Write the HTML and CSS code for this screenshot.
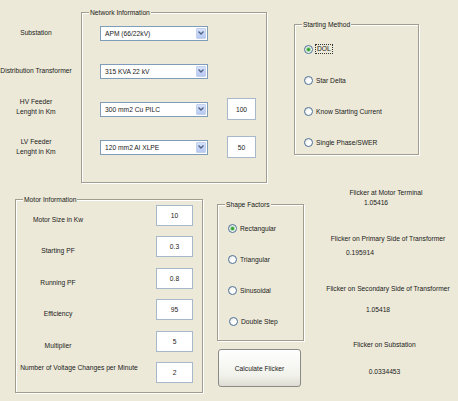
FILE: index.html
```html
<!DOCTYPE html>
<html lang="en">
<head>
    <meta charset="UTF-8">
    <meta name="viewport" content="width=device-width, initial-scale=1.0">
    <title>Flicker Calculator</title>
    <link rel="stylesheet" href="styles.css">
</head>
<body>
    <div class="app">
        <div class="top">
            <div class="side-labels">
                <div class="lbl">Substation</div>
                <div class="lbl">Distribution Transformer</div>
                <div class="lbl lbl-up">HV Feeder<br>Lenght in Km</div>
                <div class="lbl">LV Feeder<br>Lenght in Km</div>
            </div>

            <div class="panel net">
                <span class="panel-title">Network Information</span>
                <div class="net-row">
                    <div class="combo"><span>APM (66/22kV)</span><i class="combo-btn"><svg width="6" height="4" viewBox="0 0 6 4"><path d="M0.5 0.5 L3 3 L5.5 0.5" fill="none" stroke="#4d6185" stroke-width="1.3"/></svg></i></div>
                </div>
                <div class="net-row">
                    <div class="combo"><span>315 KVA 22 kV</span><i class="combo-btn"><svg width="6" height="4" viewBox="0 0 6 4"><path d="M0.5 0.5 L3 3 L5.5 0.5" fill="none" stroke="#4d6185" stroke-width="1.3"/></svg></i></div>
                </div>
                <div class="net-row">
                    <div class="combo"><span>300 mm2 Cu PILC</span><i class="combo-btn"><svg width="6" height="4" viewBox="0 0 6 4"><path d="M0.5 0.5 L3 3 L5.5 0.5" fill="none" stroke="#4d6185" stroke-width="1.3"/></svg></i></div>
                    <div class="edit net-edit">100</div>
                </div>
                <div class="net-row">
                    <div class="combo"><span>120 mm2 Al XLPE</span><i class="combo-btn"><svg width="6" height="4" viewBox="0 0 6 4"><path d="M0.5 0.5 L3 3 L5.5 0.5" fill="none" stroke="#4d6185" stroke-width="1.3"/></svg></i></div>
                    <div class="edit net-edit">50</div>
                </div>
            </div>

            <div class="panel start">
                <span class="panel-title">Starting Method</span>
                <label class="radio"><i class="radio-dot on"></i><span class="focus">DOL</span></label>
                <label class="radio"><i class="radio-dot"></i>Star Delta</label>
                <label class="radio"><i class="radio-dot"></i>Know Starting Current</label>
                <label class="radio"><i class="radio-dot"></i>Single Phase/SWER</label>
            </div>
        </div>

        <div class="bottom">
            <div class="panel motor">
                <span class="panel-title">Motor Information</span>
                <div class="motor-row"><div class="lbl">Motor Size in Kw</div><div class="edit">10</div></div>
                <div class="motor-row"><div class="lbl">Starting PF</div><div class="edit">0.3</div></div>
                <div class="motor-row"><div class="lbl">Running PF</div><div class="edit">0.8</div></div>
                <div class="motor-row"><div class="lbl">Efficiency</div><div class="edit">95</div></div>
                <div class="motor-row"><div class="lbl">Multiplier</div><div class="edit">5</div></div>
                <div class="motor-row"><div class="lbl lbl-wide">Number of Voltage Changes per Minute</div><div class="edit">2</div></div>
            </div>

            <div class="mid">
                <div class="panel shape">
                    <span class="panel-title">Shape Factors</span>
                    <label class="radio"><i class="radio-dot on"></i>Rectangular</label>
                    <label class="radio"><i class="radio-dot"></i>Triangular</label>
                    <label class="radio"><i class="radio-dot"></i>Sinusoidal</label>
                    <label class="radio radio-shift"><i class="radio-dot"></i>Double Step</label>
                </div>
                <button type="button" class="calc">Calculate Flicker</button>
            </div>

            <div class="results">
                <p class="r1">Flicker at Motor Terminal</p>
                <p class="r2">1.05416</p>
                <p class="r3">Flicker on Primary Side of Transformer</p>
                <p class="r4">0.195914</p>
                <p class="r5">Flicker on Secondary Side of Transformer</p>
                <p class="r6">1.05418</p>
                <p class="r7">Flicker on Substation</p>
                <p class="r8">0.0334453</p>
            </div>
        </div>
    </div>
</body>
</html>
```

FILE: styles.css
```css
* { box-sizing: border-box; }
body { margin: 0; background: #ece9d8; font-family: "Liberation Sans", Arial, sans-serif; font-size: 6.7px; color: #1a1a1a; }
.app { width: 458px; height: 401px; overflow: hidden; background: #ece9d8; }

/* panels (etched frame with title on the border) */
.panel { position: relative; border: 1px solid #a19e90; box-shadow: inset 1px 1px 0 #fff, 1px 1px 0 #fff; }
.panel-title { position: absolute; top: -5px; left: 7px; padding: 0 1px; line-height: 9px; background: #ece9d8; white-space: nowrap; }

/* top part */
.top { display: flex; align-items: flex-start; height: 183px; }
.side-labels { width: 81px; padding: 14px 9px 0 0; display: flex; flex-direction: column; }
.side-labels .lbl { height: 38px; display: flex; align-items: center; justify-content: center; text-align: center; line-height: 10px; white-space: nowrap; }
.side-labels .lbl-up { padding-bottom: 5px; }

.net { width: 186px; height: 171px; margin-top: 12px; padding-top: 1px; }
.net-row { height: 38px; display: flex; align-items: center; padding-left: 18px; }
.combo { width: 108px; height: 15px; display: flex; align-items: center; justify-content: space-between; padding: 1px 1px 1px 4px; background: #fff; border: 1px solid #7f9db9; }
.combo-btn { width: 10px; height: 100%; display: flex; align-items: center; justify-content: center; background: linear-gradient(#d6e2fb, #b7c9f2); border: 1px solid #c3d1ee; border-radius: 1px; }
.edit { display: flex; align-items: center; justify-content: center; background: #fff; border: 1px solid #a8b8cc; }
.net-edit { width: 29px; height: 22px; margin-left: 19px; }

.start { width: 125px; height: 131px; margin: 24px 0 0 27px; padding: 19px 0 0 9px; display: flex; flex-direction: column; gap: 21px; }

/* radio buttons */
.radio { display: flex; align-items: center; gap: 3px; height: 10px; white-space: nowrap; }
.radio-dot { flex: none; width: 9px; height: 9px; border-radius: 50%; border: 1px solid #4e719c; background: radial-gradient(circle at 65% 65%, #fff 0, #fff 35%, #dcd9cf 100%); }
.radio-dot.on::after { content: ""; display: block; width: 3px; height: 3px; margin: 2px; border-radius: 50%; background: #2e9f2e; box-shadow: 0 0 0 1px #a6d8a6; }
.focus { outline: 1px dotted #333; padding: 0 1px; line-height: 8px; }
.radio-shift { margin-left: 1px; }

/* bottom part */
.bottom { display: flex; align-items: flex-start; }
.motor { width: 188px; height: 194px; margin: 16px 0 0 15px; padding: 5px 9px 0 0; display: flex; flex-direction: column; gap: 10.4px; }
.motor-row { height: 21px; display: flex; align-items: flex-end; }
.motor-row .lbl { width: 84px; text-align: center; line-height: 8px; margin-bottom: 2px; white-space: nowrap; }
.motor-row .lbl-wide { width: 126px; margin-bottom: 11px; }
.motor-row .edit { width: 37px; height: 21px; margin-left: auto; }

.mid { width: 87px; margin: 21px 0 0 14px; display: flex; flex-direction: column; }
.shape { height: 137px; padding: 18px 0 0 10px; display: flex; flex-direction: column; gap: 21px; }
.calc { width: 83px; height: 38px; margin: 8px 0 0 1px; font: inherit; color: #1a1a1a; border: 1px solid #8a8a86; border-radius: 3px; background: linear-gradient(#fefefe, #f2f2ec 70%, #dedcd2); }

.results { width: 140px; margin: 5px 0 0 14px; }
.results p { margin: 0; line-height: 9px; text-align: center; white-space: nowrap; }
.results .r1 { padding-right: 4px; }
.results .r2 { margin-top: 1px; padding-right: 24px; }
.results .r3 { margin-top: 27px; }
.results .r4 { margin-top: 5px; padding-right: 56px; }
.results .r5 { margin-top: 27px; }
.results .r6 { margin-top: 12px; padding-right: 20px; }
.results .r7 { margin-top: 26px; padding-right: 7px; }
.results .r8 { margin-top: 18px; padding-right: 7px; }
```
